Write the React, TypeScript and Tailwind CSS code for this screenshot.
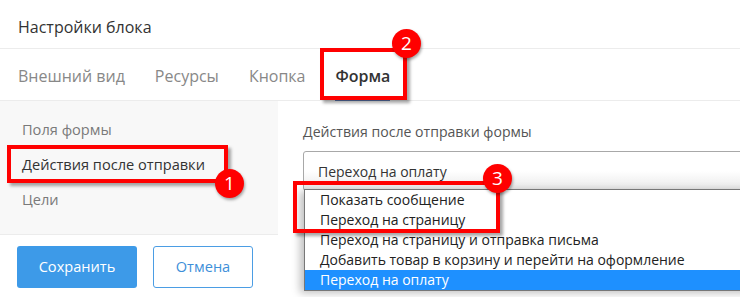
const tabs = ['Внешний вид', 'Ресурсы', 'Кнопка', 'Форма'];
const sideItems = ['Поля формы', 'Действия после отправки', 'Цели'];
const options = [
  'Показать сообщение',
  'Переход на страницу',
  'Переход на страницу и отправка письма',
  'Добавить товар в корзину и перейти на оформление',
  'Переход на оплату',
];

function Badge({ n, className }: { n: number; className: string }) {
  return (
    <div className={`absolute w-[29px] h-[29px] rounded-full bg-[#ff0000] text-white text-[19px] leading-none flex items-center justify-center shadow-[1px_2px_3px_rgba(0,0,0,0.35)] ${className}`}>
      {n}
    </div>
  );
}

export default function App() {
  return (
    <div className="relative w-[740px] h-[297px] overflow-hidden bg-white font-['Open_Sans',sans-serif] text-[#333]">
      <div className="h-[49px] border-b border-[#ececec] flex items-center px-[18px] pt-[6px] text-[16px]">Настройки блока</div>

      <div className="h-[52px] border-b border-[#ececec] flex items-stretch px-[18px] gap-[30px] text-[16px]">
        {tabs.map((t, i) => (
          <div key={t} className={`relative flex items-center pt-[2px] ${i === 3 ? 'font-semibold text-[#333]' : 'text-[#888]'}`}>
            {t}
            {i === 3 && <div className="absolute left-0 right-0 bottom-[-1px] h-[2px] bg-[#5b78b0]" />}
          </div>
        ))}
      </div>

      <div className="flex">
        <div className="w-[278px] shrink-0">
          <div className="h-[134px] bg-[#f8f8f8] border-b border-[#ececec] flex flex-col pt-[18px] px-[22px] gap-[15px] text-[14.6px]">
            {sideItems.map((s, i) => (
              <div key={s} className={`h-[20px] leading-[20px] ${i === 1 ? 'text-[#333]' : 'text-[#7a7a7a]'}`}>{s}</div>
            ))}
          </div>
          <div className="flex gap-[16px] px-[17px] pt-[11px]">
            <button className="w-[120px] h-[42px] rounded-[3px] bg-[#3d9ae8] text-white text-[14.6px]">Сохранить</button>
            <button className="w-[100px] h-[42px] rounded-[3px] border border-[#4b9de4] text-[#3d8fd9] text-[14.6px]">Отмена</button>
          </div>
        </div>

        <div className="flex-1 pl-[25px] pt-[21px]">
          <div className="text-[14.1px] text-[#555] h-[20px] leading-[20px]">Действия после отправки формы</div>
          <div className="relative mt-[9px]">
            <div className="w-[460px] h-[40px] border border-[#a8a8a8] rounded-[3px] bg-gradient-to-b from-white from-50% to-[#e9e9e9] flex items-center pl-[14px] text-[14px] text-[#333]">
              Переход на оплату
            </div>
            <div className="absolute left-[1px] top-[38px] w-[460px] border border-[#777] bg-white shadow-[-4px_2px_8px_rgba(0,0,0,0.25)] text-[14px] text-[#222] flex flex-col">
              {options.map((o, i) => (
                <div key={o} className={`h-[20px] leading-[20px] pl-[15px] ${i === 4 ? 'bg-[#1e90ff] text-white' : ''}`}>{o}</div>
              ))}
            </div>
          </div>
        </div>
      </div>

      <div className="absolute left-[320px] top-[48px] w-[87px] h-[52px] border-[4px] border-[#ff0000] shadow-[3px_3px_3px_rgba(0,0,0,0.35)]" />
      <div className="absolute left-[7px] top-[145px] w-[221px] h-[38px] border-[4px] border-[#ff0000] shadow-[3px_3px_3px_rgba(0,0,0,0.35)]" />
      <div className="absolute left-[293px] top-[181px] w-[207px] h-[52px] border-[4px] border-[#ff0000] shadow-[3px_3px_3px_rgba(0,0,0,0.35)]" />
      <Badge n={2} className="left-[392px] top-[29px]" />
      <Badge n={1} className="left-[215px] top-[169px]" />
      <Badge n={3} className="left-[483px] top-[164px]" />
    </div>
  );
}
